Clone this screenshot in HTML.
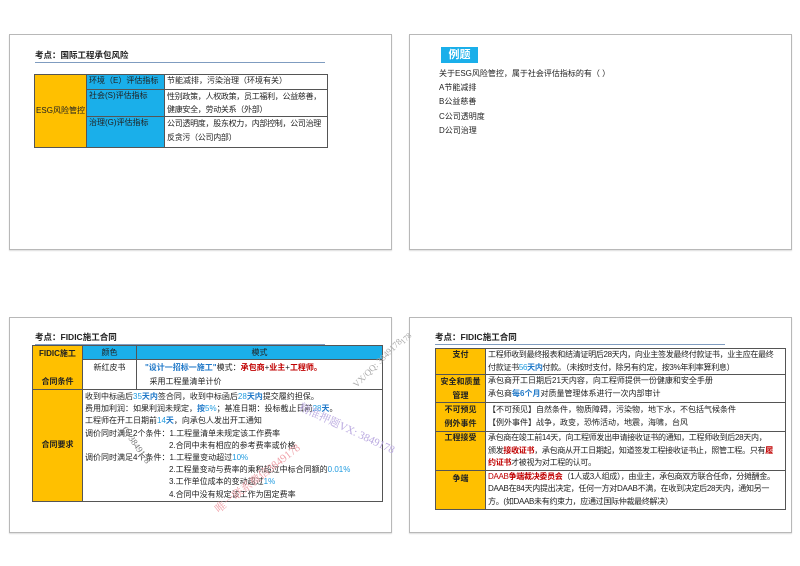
<!DOCTYPE html>
<html><head><meta charset="utf-8">
<style>
*{margin:0;padding:0;box-sizing:border-box}
body{width:800px;height:566px;background:#fff;position:relative;overflow:hidden;font-family:"Liberation Sans","Noto Sans CJK SC",sans-serif;color:#222}
.slide{position:absolute;border:1px solid #b8b8b8;background:#fff;box-shadow:0 1px 1px #ddd}
.abs{position:absolute;white-space:nowrap}
.title{font-size:8.5px;font-weight:bold}
.ul{position:absolute;height:1px;background:#7f9cc0}
table{position:absolute;border-collapse:collapse;font-size:8px;line-height:12px;table-layout:fixed}
td{border:1px solid #555;vertical-align:top;padding:0 2px;white-space:nowrap;overflow:hidden}
.o{background:#FFC000;font-weight:bold;text-align:center;vertical-align:middle}
.b{background:#1AAFEA}
.bl{color:#1f78c8;font-weight:bold}
.bll{color:#1f9be0}
.r{color:#c00000;font-weight:bold}
.wm{position:absolute;white-space:nowrap;font-family:"Liberation Serif","Noto Serif CJK SC",serif}
</style></head><body>

<!-- top-left -->
<div class="slide" style="left:9px;top:34px;width:383px;height:216px"></div>
<div class="abs title" style="left:35px;top:49px">考点：国际工程承包风险</div>
<div class="ul" style="left:35px;top:62px;width:290px"></div>
<table style="left:34px;top:74px;width:294px">
<col style="width:52px"><col style="width:78px"><col>
<tr style="height:15px"><td class="o" rowspan="3" style="font-weight:normal;padding:0 1px">ESG风险管控</td><td class="b">环境（E）评估指标</td><td>节能减排，污染治理（环境有关）</td></tr>
<tr style="height:27px"><td class="b">社会(S)评估指标</td><td style="line-height:13px;letter-spacing:-0.3px">性别政策，人权政策，员工福利，公益慈善，<br>健康安全，劳动关系（外部）</td></tr>
<tr style="height:31px"><td class="b">治理(G)评估指标</td><td style="line-height:14px;letter-spacing:-0.3px">公司透明度，股东权力，内部控制，公司治理<br>反贪污（公司内部）</td></tr>
</table>

<!-- top-right -->
<div class="slide" style="left:409px;top:34px;width:383px;height:216px"></div>
<div class="abs" style="left:441px;top:47px;width:37px;height:16px;background:#1AAFEA;color:#fff;font-weight:bold;font-size:11px;line-height:16px;text-align:center">例题</div>
<div class="abs" style="left:439px;top:67px;font-size:8px;line-height:14.2px">关于ESG风险管控，属于社会评估指标的有（  ）<br>A节能减排<br>B公益慈善<br>C公司透明度<br>D公司治理</div>

<!-- bottom-left -->
<div class="slide" style="left:9px;top:317px;width:383px;height:216px"></div>
<div class="abs title" style="left:35px;top:331px">考点：FIDIC施工合同</div>
<div class="ul" style="left:35px;top:344px;width:290px"></div>
<table style="left:32px;top:345px;width:351px">
<col style="width:50px"><col style="width:54px"><col>
<tr style="height:14px"><td class="o" rowspan="2" style="line-height:14px">FIDIC施工<br><br>合同条件</td><td class="b" style="text-align:center;line-height:13px">颜色</td><td class="b" style="text-align:center;line-height:13px">模式</td></tr>
<tr style="height:30px"><td style="text-align:center;padding-top:2px">新红皮书</td><td style="padding-left:8px;line-height:14px;padding-top:1px"><span class="bl">"设计一招标一施工"</span>模式：<span class="r">承包商</span>+<span class="r">业主</span>+<span class="r">工程师。</span><br>&nbsp;&nbsp;采用工程量清单计价</td></tr>
<tr style="height:111px"><td class="o">合同要求</td><td colspan="2" style="line-height:12.2px;padding-top:1px">收到中标函后<span class="bll">35</span><span class="bl">天内</span>签合同，收到中标函后<span class="bll">28</span><span class="bl">天内</span>提交履约担保。<br>费用加利润：如果利润未规定，<span class="bl">按</span><span class="bll">5%</span>；基准日期：投标截止日前<span class="bll">28</span><span class="bl">天</span>。<br>工程师在开工日期前<span class="bll">14</span><span class="bl">天</span>，向承包人发出开工通知<br>调价同时满足2个条件：1.工程量清单未规定该工作费率<br><span style="padding-left:84px">2.合同中未有相应的参考费率或价格</span><br>调价同时满足4个条件：1.工程量变动超过<span class="bll">10%</span><br><span style="padding-left:84px">2.工程量变动与费率的乘积超过中标合同额的<span class="bll">0.01%</span></span><br><span style="padding-left:84px">3.工作单位成本的变动超过<span class="bll">1%</span></span><br><span style="padding-left:84px">4.合同中没有规定该工作为固定费率</span></td></tr>
</table>

<!-- bottom-right -->
<div class="slide" style="left:409px;top:317px;width:383px;height:216px"></div>
<div class="abs title" style="left:435px;top:331px">考点：FIDIC施工合同</div>
<div class="ul" style="left:435px;top:344px;width:290px"></div>
<table style="left:435px;top:348px;width:351px;line-height:12.5px">
<col style="width:50px"><col>
<tr style="height:25px"><td class="o" style="vertical-align:top">支付</td><td style="letter-spacing:-0.3px">工程师收到最终报表和结清证明后28天内，向业主签发最终付款证书，业主应在最终<br>付款证书<span class="bll">56</span><span class="bl">天内</span>付款。（未按时支付，除另有约定，按3%年利率算利息）</td></tr>
<tr style="height:28px"><td class="o" style="line-height:13.5px">安全和质量<br>管理</td><td>承包商开工日期后21天内容，向工程师提供一份健康和安全手册<br>承包商<span class="bl">每6个月</span>对质量管理体系进行一次内部审计</td></tr>
<tr style="height:29px"><td class="o" style="line-height:14px">不可预见<br>例外事件</td><td style="line-height:13px">【不可预见】自然条件，物质障碍，污染物，地下水，不包括气候条件<br>【例外事件】战争，政变，恐怖活动，地震，海啸，台风</td></tr>
<tr style="height:36px"><td class="o" style="vertical-align:top">工程接受</td><td style="letter-spacing:-0.3px">承包商在竣工前14天，向工程师发出申请接收证书的通知，工程师收到后28天内，<br>颁发<span class="r">接收证书</span>，承包商从开工日期起，知道签发工程接收证书止，照管工程。只有<span class="r">履</span><br><span class="r">约证书</span>才被视为对工程的认可。</td></tr>
<tr style="height:39px"><td class="o" style="vertical-align:top;padding-top:2px">争端</td><td style="letter-spacing:-0.3px"><span class="r" style="font-weight:normal">DAAB</span><span class="r">争端裁决委员会</span>（1人或3人组成），由业主，承包商双方联合任命，分摊酬金。<br>DAAB在84天内提出决定，任何一方对DAAB不满，在收到决定后28天内，通知另一<br>方。(如DAAB未有约束力，应通过国际仲裁最终解决）</td></tr>
</table>

<!-- watermarks -->
<div class="wm" style="left:345px;top:358px;font-size:9px;color:#aaa;transform:rotate(-45deg)">VX/QQ: 3849178</div>
<div class="wm" style="left:295px;top:420px;font-size:11px;color:#b9a8e0;transform:rotate(25deg)">精准押题VX: 3849178</div>
<div class="wm" style="left:205px;top:470px;font-size:11px;color:#f0a0a8;transform:rotate(-38deg)">唯一联系微信3849178</div>
<div class="wm" style="left:115px;top:440px;font-size:9px;color:#777;transform:rotate(55deg)">Q: 3849178</div>
<div class="wm" style="left:400px;top:334px;font-size:8px;color:#aaa;transform:rotate(-45deg)">178</div>
</body></html>
